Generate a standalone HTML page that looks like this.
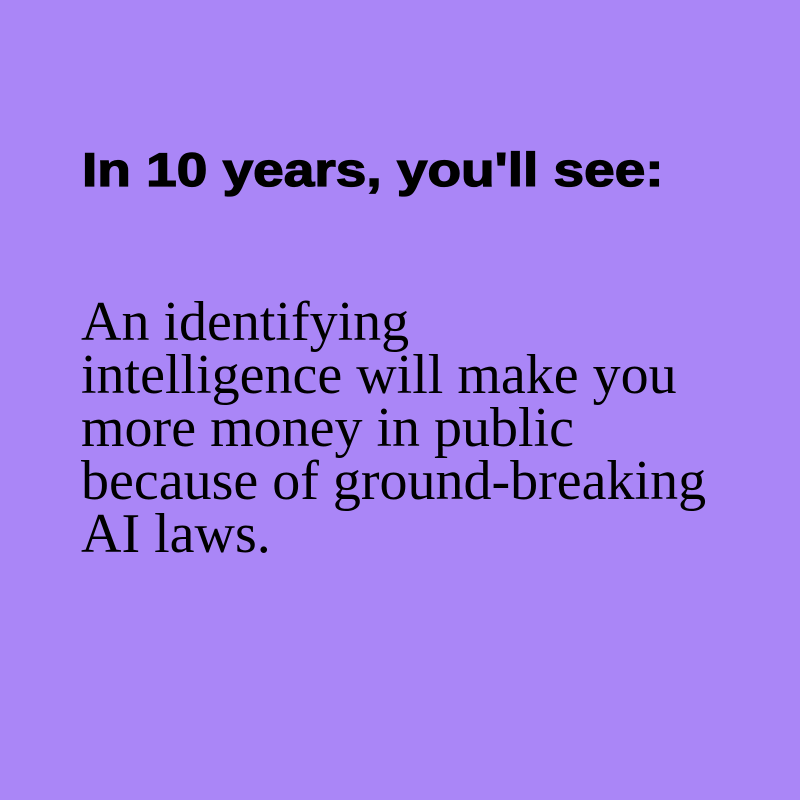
<!DOCTYPE html>
<html><head><style>
html,body{margin:0;padding:0;}
body{width:800px;height:800px;background:#aa86f7;position:relative;overflow:hidden;}
h1{position:absolute;left:82px;top:146px;margin:0;font:bold 47px/47px "Liberation Sans",sans-serif;color:#000;white-space:nowrap;transform:scaleX(1.17);transform-origin:0 0;-webkit-text-stroke:1.3px #000;}
p{position:absolute;left:81px;top:296px;margin:0;font:56px/53px "Liberation Serif",serif;color:#000;white-space:nowrap;}
</style></head><body>
<h1>In 10 years, you'll see:</h1>
<p>An identifying<br>intelligence will make you<br>more money in public<br>because of ground-breaking<br>AI laws.</p>
</body></html>
